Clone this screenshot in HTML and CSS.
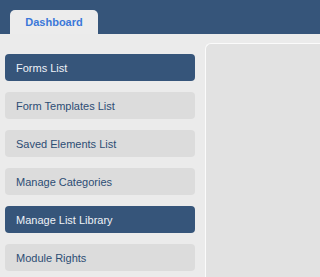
FILE: index.html
```html
<!DOCTYPE html>
<html>
<head>
<meta charset="utf-8">
<link rel="stylesheet" href="styles.css">
</head>
<body>
<div class="header">
  <div class="tab">Dashboard</div>
</div>
<div class="main">
  <nav class="menu">
    <a class="item active">Forms List</a>
    <a class="item">Form Templates List</a>
    <a class="item">Saved Elements List</a>
    <a class="item">Manage Categories</a>
    <a class="item active">Manage List Library</a>
    <a class="item">Module Rights</a>
  </nav>
  <div class="panel"></div>
</div>
</body>
</html>
```
FILE: styles.css
```css
html, body {
  margin: 0;
  padding: 0;
  height: 100%;
}
body {
  background: #ebebeb;
  font-family: "Liberation Sans", Arial, sans-serif;
  overflow: hidden;
}
.header {
  background: #36557a;
  height: 34px;
  padding: 10px 0 0 10px;
  box-sizing: border-box;
  display: flex;
  align-items: flex-end;
}
.tab {
  width: 88px;
  height: 24px;
  background: #ececec;
  border-radius: 5px 5px 0 0;
  color: #3b78d9;
  font-weight: bold;
  font-size: 11px;
  display: flex;
  align-items: center;
  justify-content: center;
  box-sizing: border-box;
  padding-bottom: 1px;
}
.main {
  display: flex;
  height: calc(100% - 34px);
}
.menu {
  width: 190px;
  padding: 20px 0 0 5px;
  display: flex;
  flex-direction: column;
  gap: 11px;
  flex-shrink: 0;
}
.item {
  height: 27px;
  border-radius: 4px;
  background: #dcdcdc;
  color: #2d4d74;
  font-size: 11px;
  display: flex;
  align-items: center;
  padding-left: 11px;
  box-sizing: border-box;
}
.item.active {
  background: #36557a;
  color: #eef2f7;
}
.panel {
  margin: 9px 0 0 10px;
  flex: 1;
  background: #e2e2e2;
  border-left: 1px solid #fbfbfb;
  border-top: 1px solid #fbfbfb;
  border-top-left-radius: 6px;
}
```
